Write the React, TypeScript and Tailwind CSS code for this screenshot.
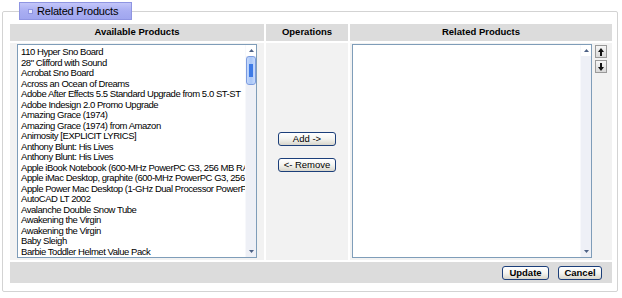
const available = [
  "110 Hyper Sno Board",
  '28" Clifford with Sound',
  "Acrobat Sno Board",
  "Across an Ocean of Dreams",
  "Adobe After Effects 5.5 Standard Upgrade from 5.0 ST-ST",
  "Adobe Indesign 2.0 Promo Upgrade",
  "Amazing Grace (1974)",
  "Amazing Grace (1974) from Amazon",
  "Animosity [EXPLICIT LYRICS]",
  "Anthony Blunt: His Lives",
  "Anthony Blunt: His Lives",
  "Apple iBook Notebook (600-MHz PowerPC G3, 256 MB RAM",
  "Apple iMac Desktop, graphite (600-MHz PowerPC G3, 256 MB",
  "Apple Power Mac Desktop (1-GHz Dual Processor PowerPC G4",
  "AutoCAD LT 2002",
  "Avalanche Double Snow Tube",
  "Awakening the Virgin",
  "Awakening the Virgin",
  "Baby Sleigh",
  "Barbie Toddler Helmet Value Pack",
];

// tiny triangle used on the fake scrollbars
const Tri = ({ down }: { down?: boolean }) => (
  <svg width="5" height="3" viewBox="0 0 5 3" className="block">
    <path d={down ? "M0 0H5L2.5 3Z" : "M2.5 0L5 3H0Z"} fill="#4d6185" />
  </svg>
);

const ScrollBar = ({ thumb }: { thumb?: boolean }) => (
  <div className="w-[11px] h-full flex flex-col items-center bg-[#eef0f6] border-l border-[#f7f8fb]">
    <div className="h-[11px] w-full flex items-center justify-center bg-white">
      <Tri />
    </div>
    {thumb && (
      <div className="w-[10px] h-[29px] rounded-[3px] border border-[#7b9ce0] bg-gradient-to-r from-[#c7dafc] via-[#a9c6f6] to-[#c7dafc] flex items-center justify-center">
        <div className="w-[4px] h-[13px] bg-[#3d7ae6]" />
      </div>
    )}
    <div className="flex-1" />
    <div className="h-[11px] w-full flex items-center justify-center">
      <Tri down />
    </div>
  </div>
);

const XpButton = ({ label, bold, w }: { label: string; bold?: boolean; w: string }) => (
  <button
    className={`${w} h-[14px] rounded-[3px] border border-[#1c3f7a] bg-gradient-to-b from-white via-[#f4f4f0] to-[#d8d6cc] text-[9.5px] leading-none text-black ${bold ? "font-bold" : ""}`}
  >
    {label}
  </button>
);

const ArrowBtn = ({ down }: { down?: boolean }) => (
  <div className="w-[12px] h-[13px] border border-[#9a9a9a] bg-gradient-to-b from-[#f6f6f6] to-[#d9d9d9] flex items-center justify-center">
    <svg width="6" height="8" viewBox="0 0 6 8">
      {down ? (
        <path d="M2 0H4V4H6L3 8L0 4H2Z" fill="#111" />
      ) : (
        <path d="M3 0L6 4H4V8H2V4H0Z" fill="#111" />
      )}
    </svg>
  </div>
);

export default function App() {
  return (
    <div className="w-[622px] h-[298px] bg-white font-['Liberation_Sans',Arial,sans-serif] text-black pt-[2px] px-[2px]">
      <fieldset className="w-[616px] h-[290px] border border-[#d3d3d3] rounded-[2px]">
        <legend className="ml-[16px] w-[113px] h-[18px] flex items-center gap-[4px] pl-[8px] border border-[#8f95e2] bg-gradient-to-b from-[#c3c6f9] via-[#a9aef2] to-[#a0a6ef] text-[11px] tracking-[-0.2px] text-black">
          <span className="w-[5px] h-[5px] border border-[#8f95e2] bg-[#e6e8fe]" />
          Related Products
        </legend>

        <div className="mt-[4px] ml-[7px] w-[602px] flex flex-col gap-[2px]">
          {/* header row */}
          <div className="flex gap-[2px] h-[17px] text-[9.5px] font-bold">
            <div className="w-[254px] bg-[#dcdcdc] flex items-center justify-center">Available Products</div>
            <div className="w-[82px] bg-[#dcdcdc] flex items-center justify-center">Operations</div>
            <div className="w-[262px] bg-[#dcdcdc] flex items-center justify-center">Related Products</div>
          </div>

          {/* body row */}
          <div className="flex gap-[2px] h-[217px]">
            <div className="w-[254px] bg-[#f2f2f2] pt-[1px] px-[7px]">
              <div className="w-[240px] h-[214px] border border-[#7f9db9] bg-white flex">
                <div className="flex-1 overflow-hidden pl-[3px] pt-[2px] text-[9.5px] leading-[10.5px] tracking-[-0.45px] whitespace-nowrap">
                  {available.map((p, i) => (
                    <div key={i}>{p}</div>
                  ))}
                </div>
                <ScrollBar thumb />
              </div>
            </div>

            <div className="w-[82px] bg-[#f2f2f2] flex flex-col items-center justify-center gap-[12px]">
              <XpButton label="Add  ->" w="w-[58px]" />
              <XpButton label="<- Remove" w="w-[58px]" />
            </div>

            <div className="w-[262px] bg-[#f2f2f2] pt-[1px] pl-[2px] flex gap-[3px]">
              <div className="w-[240px] h-[214px] border border-[#7f9db9] bg-white flex">
                <div className="flex-1" />
                <ScrollBar />
              </div>
              <div className="flex flex-col gap-[2px] pt-[1px]">
                <ArrowBtn />
                <ArrowBtn down />
              </div>
            </div>
          </div>

          {/* footer row */}
          <div className="h-[21px] bg-[#dcdcdc] flex items-center justify-end gap-[9px] pr-[10px]">
            <XpButton label="Update" bold w="w-[47px]" />
            <XpButton label="Cancel" bold w="w-[44px]" />
          </div>
        </div>
      </fieldset>
    </div>
  );
}
